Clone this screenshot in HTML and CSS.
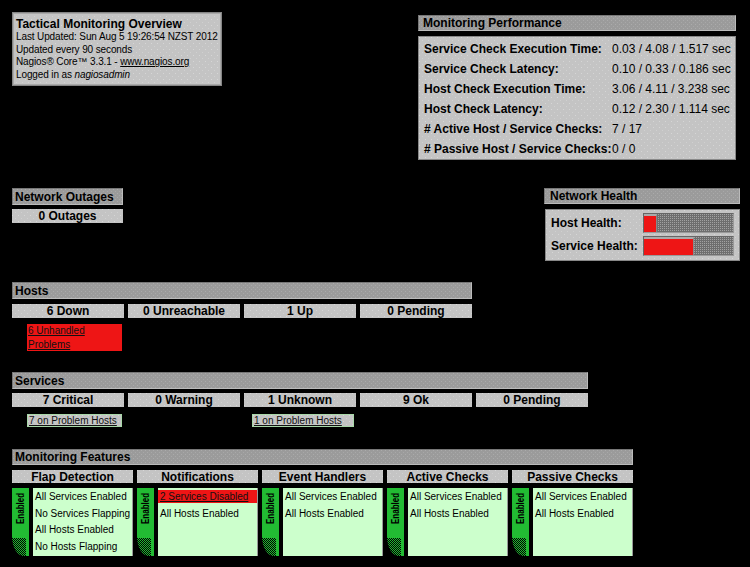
FILE: index.html
```html
<!DOCTYPE html>
<html>
<head>
<meta charset="utf-8">
<title>Tactical Monitoring Overview</title>
<link rel="stylesheet" href="styles.css">
</head>
<body>
<div class="page">
  <div class="top">
    <div class="info light">
      <div class="title">Tactical Monitoring Overview</div>
      <div>Last Updated: Sun Aug 5 19:26:54 NZST 2012</div>
      <div>Updated every 90 seconds</div>
      <div>Nagios® Core™ 3.3.1 - <a href="#">www.nagios.org</a></div>
      <div>Logged in as <i>nagiosadmin</i></div>
    </div>
    <div class="perf">
      <div class="hdr dark">Monitoring Performance</div>
      <div class="perf-body light">
        <div class="prow"><span class="plabel">Service Check Execution Time:</span><span>0.03 / 4.08 / 1.517 sec</span></div>
        <div class="prow"><span class="plabel">Service Check Latency:</span><span>0.10 / 0.33 / 0.186 sec</span></div>
        <div class="prow"><span class="plabel">Host Check Execution Time:</span><span>3.06 / 4.11 / 3.238 sec</span></div>
        <div class="prow"><span class="plabel">Host Check Latency:</span><span>0.12 / 2.30 / 1.114 sec</span></div>
        <div class="prow"><span class="plabel"># Active Host / Service Checks:</span><span>7 / 17</span></div>
        <div class="prow"><span class="plabel"># Passive Host / Service Checks:</span><span>0 / 0</span></div>
      </div>
    </div>
  </div>

  <div class="mid">
    <div class="outages">
      <div class="hdr dark">Network Outages</div>
      <div class="cell light out-cell">0 Outages</div>
    </div>
    <div class="health">
      <div class="hdr dark">Network Health</div>
      <div class="health-body light">
        <div class="hrow"><span class="hlabel">Host Health:</span><div class="bar"><div class="fill" style="width:13px"></div></div></div>
        <div class="hrow"><span class="hlabel">Service Health:</span><div class="bar"><div class="fill" style="width:50px"></div></div></div>
      </div>
    </div>
  </div>

  <section class="hosts">
    <div class="hdr dark">Hosts</div>
    <div class="grid g4">
      <div class="cell light">6 Down</div>
      <div class="cell light">0 Unreachable</div>
      <div class="cell light">1 Up</div>
      <div class="cell light">0 Pending</div>
    </div>
    <div class="grid g4 subgrid">
      <div><a class="unhandled" href="#">6 Unhandled Problems</a></div>
    </div>
  </section>

  <section class="services">
    <div class="hdr dark">Services</div>
    <div class="grid g5">
      <div class="cell light">7 Critical</div>
      <div class="cell light">0 Warning</div>
      <div class="cell light">1 Unknown</div>
      <div class="cell light">9 Ok</div>
      <div class="cell light">0 Pending</div>
    </div>
    <div class="grid g5 subgrid2">
      <div><a class="onph light" href="#">7 on Problem Hosts</a></div>
      <div></div>
      <div><a class="onph onph-b light" href="#">1 on Problem Hosts</a></div>
    </div>
  </section>

  <section class="features">
    <div class="hdr dark fhdr">Monitoring Features</div>
    <div class="grid g5">
      <div class="feat">
        <div class="cell light fsub">Flap Detection</div>
        <div class="fbody">
          <div class="tab"><span>Enabled</span></div>
          <div class="panel">
            <div class="line">All Services Enabled</div>
            <div class="line">No Services Flapping</div>
            <div class="line">All Hosts Enabled</div>
            <div class="line">No Hosts Flapping</div>
          </div>
        </div>
      </div>
      <div class="feat">
        <div class="cell light fsub">Notifications</div>
        <div class="fbody">
          <div class="tab"><span>Enabled</span></div>
          <div class="panel">
            <div class="line bad"><a href="#">2 Services Disabled</a></div>
            <div class="line">All Hosts Enabled</div>
          </div>
        </div>
      </div>
      <div class="feat">
        <div class="cell light fsub">Event Handlers</div>
        <div class="fbody">
          <div class="tab"><span>Enabled</span></div>
          <div class="panel">
            <div class="line">All Services Enabled</div>
            <div class="line">All Hosts Enabled</div>
          </div>
        </div>
      </div>
      <div class="feat">
        <div class="cell light fsub">Active Checks</div>
        <div class="fbody">
          <div class="tab"><span>Enabled</span></div>
          <div class="panel">
            <div class="line">All Services Enabled</div>
            <div class="line">All Hosts Enabled</div>
          </div>
        </div>
      </div>
      <div class="feat">
        <div class="cell light fsub">Passive Checks</div>
        <div class="fbody">
          <div class="tab"><span>Enabled</span></div>
          <div class="panel">
            <div class="line">All Services Enabled</div>
            <div class="line">All Hosts Enabled</div>
          </div>
        </div>
      </div>
    </div>
  </section>
</div>
</body>
</html>
```

FILE: styles.css
```css
* { box-sizing: border-box; margin: 0; padding: 0; }
html, body { background: #000; }
body {
  font-family: "Liberation Sans", Arial, sans-serif;
  color: #000;
  width: 750px;
  height: 567px;
  overflow: hidden;
}
a { color: inherit; text-decoration: underline; }

.page {
  padding: 12px 0 0 12px;
  display: flex;
  flex-direction: column;
}

/* textures */
.light {
  background-color: #c4c4c4;
  background-image:
    conic-gradient(at 1px 1px, transparent 75%, #d6d6d6 0),
    conic-gradient(at 1px 1px, transparent 75%, #d0d0d0 0);
  background-size: 6px 6px, 6px 6px;
  background-position: 0 0, 3px 3px;
}
.dark {
  background-color: #9b9b9b;
  background-image:
    conic-gradient(at 1px 1px, transparent 75%, #ababab 0),
    conic-gradient(at 1px 1px, transparent 75%, #a8a8a8 0);
  background-size: 4px 4px, 4px 4px;
  background-position: 0 0, 2px 2px;
}

.hdr {
  height: 17px;
  line-height: 16px;
  font-size: 12px;
  font-weight: bold;
  padding-left: 2px;
  border: 1px solid #777;
  border-right-color: #bbb;
  border-bottom-color: #bbb;
  white-space: nowrap;
}

.cell {
  height: 14px;
  line-height: 15px;
  text-align: center;
  font-size: 12px;
  font-weight: bold;
  white-space: nowrap;
}

/* top row */
.top {
  display: flex;
  justify-content: space-between;
  align-items: flex-start;
  padding-right: 14px;
  height: 148px;
}
.info {
  width: 210px;
  height: 74px;
  padding: 4px 3px;
  border: 1px solid #858585;
  box-shadow: inset 0 0 0 1px #a8a8a8;
  font-size: 10px;
  line-height: 12.5px;
  white-space: nowrap;
  letter-spacing: -0.12px;
}
.title {
  font-size: 12px;
  font-weight: bold;
  line-height: 14px;
  letter-spacing: 0;
}
.perf {
  width: 318px;
  margin-top: 3px;
}
.perf .hdr {
  height: 16px;
  line-height: 15px;
  padding-left: 4px;
}
.perf-body {
  margin-top: 5px;
  height: 124px;
  padding: 2px 0 0 5px;
  border: 1px solid #888;
}
.prow {
  display: flex;
  height: 20px;
  line-height: 20px;
  font-size: 12px;
  white-space: nowrap;
}
.plabel {
  width: 188px;
  font-weight: bold;
}

/* middle row */
.mid {
  display: flex;
  justify-content: space-between;
  align-items: flex-start;
  padding-right: 10px;
  margin-top: 28px;
  height: 73px;
}
.outages { width: 111px; }
.out-cell { margin-top: 4px; }
.health { width: 196px; }
.health .hdr {
  height: 16px;
  line-height: 15px;
  padding-left: 5px;
}
.health-body {
  margin: 5px 0 0 1px;
  height: 52px;
  padding: 3px 5px 0 5px;
  border: 1px solid #888;
}
.hrow {
  display: flex;
  align-items: center;
  height: 20px;
  font-size: 12px;
  font-weight: bold;
}
.hrow + .hrow { margin-top: 3px; }
.hlabel { width: 92px; }
.bar {
  width: 91px;
  height: 20px;
  border: 1px solid #9a9a9a;
  border-top-color: #666;
  border-left-color: #666;
  background-color: #6e6e6e;
  background-image: conic-gradient(at 1px 1px, transparent 75%, #a2a2a2 0);
  background-size: 2px 2px;
}
.fill {
  height: 100%;
  background: #ee1515;
  border-top: 2px solid #aaa;
  border-right: 1px solid #888;
}

/* hosts */
.hosts {
  margin-top: 21px;
  width: 460px;
}
.grid {
  display: grid;
  gap: 4px;
  margin-top: 5px;
}
.g4 { grid-template-columns: repeat(4, 1fr); }
.g5 { grid-template-columns: repeat(5, 1fr); }
.subgrid { margin-top: 6px; }
.unhandled {
  display: block;
  margin-left: 15px;
  width: 95px;
  height: 27px;
  background: #ee1515;
  font-size: 10px;
  line-height: 13.5px;
  padding-left: 1px;
  color: #111;
}

/* services */
.services {
  margin-top: 21px;
  width: 576px;
}
.services .grid { margin-top: 4px; }
.services .subgrid2 { margin-top: 7px; }
.onph {
  display: block;
  margin-left: 15px;
  width: 95px;
  height: 13px;
  font-size: 10px;
  line-height: 11px;
  padding-left: 1px;
  border: 1px solid #a8d8a8;
  color: #111;
  white-space: nowrap;
}
.onph-b {
  margin-left: 8px;
  width: 102px;
}

/* features */
.features {
  margin-top: 22px;
  width: 621px;
}
.fhdr {
  height: 16px;
  line-height: 15px;
}
.feat {
  display: flex;
  flex-direction: column;
}
.fsub {
  height: 13px;
  line-height: 14px;
}
.fbody {
  display: flex;
  gap: 4px;
  height: 68px;
  margin-top: 5px;
}
.tab {
  width: 17px;
  flex: none;
  background:
    linear-gradient(#22bb33, #22bb33) 0 0 / 100% 50px no-repeat,
    linear-gradient(#22bb33, #22bb33) right 0 top 0 / 3px 100% no-repeat,
    repeating-conic-gradient(#22bb33 0 25%, #000 0 50%) 0 0 / 2px 2px,
    #000;
  border-bottom-left-radius: 12px 20px;
}
.tab span {
  display: block;
  writing-mode: vertical-rl;
  transform: rotate(180deg) scaleY(0.8);
  font-size: 10px;
  font-weight: bold;
  line-height: 12px;
  margin: 1px auto 0;
  white-space: nowrap;
}
.panel {
  flex: 1;
  background: #ccffcc;
  border-right: 1px solid #999;
  padding-top: 1px;
  font-size: 10px;
}
.line {
  height: 16.5px;
  line-height: 16.5px;
  padding-left: 2px;
  white-space: nowrap;
}
.line.bad {
  background: linear-gradient(#ee1515, #ee1515) 0 1px / 100% 13px no-repeat;
  line-height: 15px;
  color: #111;
}
```
